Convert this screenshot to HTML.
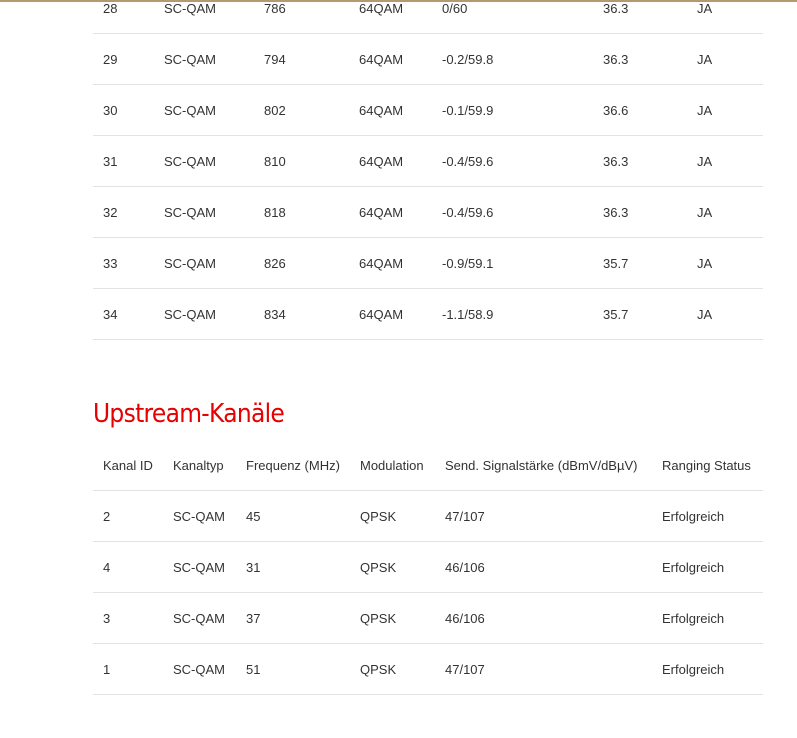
<!DOCTYPE html>
<html><head><meta charset="utf-8"><style>
html,body{margin:0;padding:0;background:#fff;width:797px;height:738px;overflow:hidden;position:relative;font-family:"Liberation Sans",Arial,sans-serif;font-size:13px;color:#333}
.top{position:absolute;left:0;top:0;width:797px;height:2px;background:#b59a6e}
.t{position:absolute;line-height:16px;white-space:nowrap}
.l{position:absolute;left:93px;width:670px;height:1px;background:#e3e3e3}
h2{position:absolute;left:93px;top:397px;margin:0;font-weight:normal;font-size:26px;color:#e60000;line-height:34px;font-family:"DejaVu Sans Condensed","Liberation Sans Narrow","Liberation Sans",sans-serif;letter-spacing:-0.7px}
</style></head><body>
<div class="top"></div>
<div id="c"></div>
<h2>Upstream-Kanäle</h2>
<script>
var c=document.getElementById('c'),h='';
function t(x,y,s){h+='<div class="t" style="left:'+x+'px;top:'+(y-7)+'px">'+s+'</div>';}
function l(y){h+='<div class="l" style="top:'+y+'px"></div>';}
var d=[["28","786","0/60","36.3"],["29","794","-0.2/59.8","36.3"],["30","802","-0.1/59.9","36.6"],["31","810","-0.4/59.6","36.3"],["32","818","-0.4/59.6","36.3"],["33","826","-0.9/59.1","35.7"],["34","834","-1.1/58.9","35.7"]];
d.forEach(function(r,i){var y=8+51*i;t(103,y,r[0]);t(164,y,"SC-QAM");t(264,y,r[1]);t(359,y,"64QAM");t(442,y,r[2]);t(603,y,r[3]);t(697,y,"JA");l(33+51*i);});
var X=[103,173,246,360,445,662];
["Kanal ID","Kanaltyp","Frequenz (MHz)","Modulation","Send. Signalstärke (dBmV/dBµV)","Ranging Status"].forEach(function(s,i){t(X[i],465,s);});
l(490);
var u=[["2","45","47/107"],["4","31","46/106"],["3","37","46/106"],["1","51","47/107"]];
u.forEach(function(r,i){var y=516+51*i;t(103,y,r[0]);t(173,y,"SC-QAM");t(246,y,r[1]);t(360,y,"QPSK");t(445,y,r[2]);t(662,y,"Erfolgreich");l(541+51*i);});
c.innerHTML=h;
</script>
</body></html>
